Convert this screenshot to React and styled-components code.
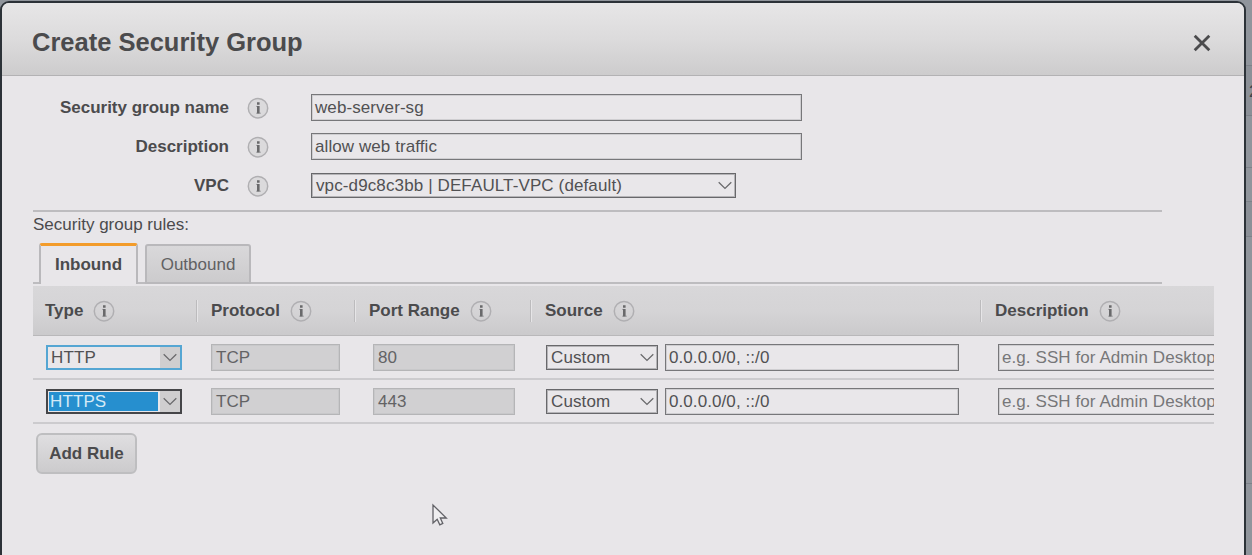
import React from 'react';
import styled, { createGlobalStyle } from 'styled-components';

const GlobalStyle = createGlobalStyle`
  * { box-sizing: border-box; }
  body {
    margin: 0;
    overflow: hidden;
    background: #90959c;
    font-family: "Liberation Sans", Arial, sans-serif;
    font-size: 17px;
    line-height: 20px;
    color: #4b4b4d;
  }
`;

const Page = styled.div`
  position: relative;
  display: flex;
  width: 1252px;
  height: 555px;
  padding-top: 1px;
  overflow: hidden;
  background: #90959c;
`;

const Modal = styled.section`
  width: 1246px;
  height: 600px;
  flex: none;
  border: 2px solid #2c3238;
  border-radius: 9px 9px 0 0;
  background: #e8e6e9;
  overflow: hidden;
`;

const Backdrop = styled.aside`
  width: 6px;
  flex: none;
  display: flex;
  flex-direction: column;
  overflow: hidden;
`;

const Strip = styled.div`
  flex: none;
  height: ${(p) => p.$h}px;
  border-bottom: 1px solid #7d8289;
  background: ${(p) => p.$bg || 'transparent'};
  padding: ${(p) => p.$pad || '0'};
  color: #3d4248;
`;

const Header = styled.header`
  display: flex;
  align-items: center;
  justify-content: space-between;
  height: 73px;
  padding: 5px 33px 0 30px;
  background: linear-gradient(#e7e6e7, #dcdbdc 50%, #cdcccd);
  border-bottom: 1px solid #b3b2b4;
`;

const Title = styled.h1`
  margin: 0;
  font-size: 25.5px;
  line-height: 30px;
  font-weight: bold;
  color: #4b4b4d;
`;

const CloseButton = styled.button`
  display: flex;
  padding: 2px 0 0;
  border: 0;
  background: none;
`;

const Body = styled.div`
  padding: 18px 0 0 31px;
`;

const Form = styled.div`
  display: flex;
  flex-direction: column;
  gap: 12px;
`;

const FormRow = styled.div`
  display: flex;
  align-items: center;
  height: 27px;
`;

const Label = styled.label`
  width: 196px;
  margin-right: 18px;
  text-align: right;
  font-weight: bold;
`;

const InfoSvg = styled.svg`
  flex: none;
  display: block;
`;

const FieldBox = styled.div`
  display: flex;
  align-items: center;
  flex: none;
  width: ${(p) => p.$w}px;
  height: 27px;
  margin-left: ${(p) => p.$ml || 0}px;
  padding: 1px 3px 0 ${(p) => (p.$disabled ? 4 : 3)}px;
  white-space: nowrap;
  letter-spacing: 0.08px;
  border: ${(p) => (p.$disabled ? '1px solid #b5b5b7' : '1px solid #77777a')};
  box-shadow: inset 0 0 0 1px ${(p) => (p.$disabled ? '#c8c8ca' : '#cfced1')};
  background: ${(p) => (p.$disabled ? '#d1d0d2' : '#e9e7ea')};
  color: ${(p) => (p.$placeholder ? '#777779' : p.$disabled ? '#636365' : '#515153')};
`;

const selectBorders = {
  hover: '2px solid #55a6d3',
  open: '2px solid #454548',
  idle: '1px solid #68686b',
};

const SelectBox = styled.div`
  display: flex;
  align-items: stretch;
  flex: none;
  width: ${(p) => p.$w}px;
  height: 25px;
  margin-left: ${(p) => p.$ml || 0}px;
  border: ${(p) => selectBorders[p.$state]};
  box-shadow: ${(p) => (p.$state === 'idle' ? 'inset 0 0 0 1px #b5b4b7' : 'none')};
  background: #e9e7ea;
`;

const SelectValue = styled.span`
  flex: 1;
  display: flex;
  align-items: center;
  margin: ${(p) => (p.$state === 'open' ? '1px 2px 1px 1px' : '0')};
  padding: 1px 0 0 ${(p) => ({ open: 1, hover: 3, idle: 4 })[p.$state]}px;
  white-space: nowrap;
  letter-spacing: 0.12px;
  background: ${(p) => (p.$state === 'open' ? '#268fcf' : 'transparent')};
  color: ${(p) => (p.$state === 'open' ? '#d4e9f6' : '#515153')};
`;

const SelectArrow = styled.span`
  display: flex;
  align-items: center;
  justify-content: center;
  width: 20px;
  background: ${(p) => (p.$shaded ? '#cfcecf' : 'transparent')};
`;

const Rules = styled.div`
  width: 1129px;
  margin-top: 11px;
  border-top: 2px solid #bdbcbf;
  padding-top: 3px;
`;

const Tabs = styled.div`
  display: flex;
  align-items: flex-end;
  height: 41px;
  margin-top: 8px;
  padding-left: 6px;
  gap: 7px;
  box-shadow: inset 0 -2px 0 #bdbcbf;
`;

const Tab = styled.div`
  display: flex;
  align-items: center;
  justify-content: center;
  height: ${(p) => (p.$active ? 41 : 40)}px;
  width: ${(p) => (p.$active ? 99 : 106)}px;
  padding-top: ${(p) => (p.$active ? 0 : 2)}px;
  border: 2px solid #b9b8bb;
  border-top: ${(p) => (p.$active ? '3px solid #f39c2b' : '2px solid #b9b8bb')};
  border-bottom: ${(p) => (p.$active ? '0' : '2px solid #b9b8bb')};
  border-radius: 3px 3px 0 0;
  background: ${(p) => (p.$active ? '#e8e6e9' : 'linear-gradient(#d9d8da, #cccbcd)')};
  font-weight: ${(p) => (p.$active ? 'bold' : 'normal')};
  color: ${(p) => (p.$active ? '#4b4b4d' : '#616163')};
`;

const Table = styled.div`
  width: 1181px;
  margin-top: 2px;
  overflow: hidden;
`;

const columns = '163px 158px 176px 450px 300px';

const TableHead = styled.div`
  display: grid;
  grid-template-columns: ${columns};
  align-items: center;
  height: 50px;
  background: linear-gradient(#d8d7d9, #d5d4d6 50%, #cbcacc);
  border-bottom: 1px solid #b9b8ba;
`;

const HeadCell = styled.div`
  display: flex;
  align-items: center;
  gap: 10px;
  height: 22px;
  padding-left: ${(p) => (p.$first ? 12 : 14)}px;
  border-left: ${(p) => (p.$first ? '0' : '1px solid #bcbbbd')};
  box-shadow: ${(p) => (p.$first ? 'none' : 'inset 1px 0 0 #e6e5e7')};
  font-weight: bold;
`;

const TableRow = styled.div`
  display: grid;
  grid-template-columns: ${columns};
  align-items: center;
  height: 44px;
  border-bottom: 2px solid #cccbce;
`;

const Cell = styled.div`
  display: flex;
  align-items: center;
  gap: 7px;
  padding-left: ${(p) => p.$pad}px;
`;

const AddButton = styled.button`
  display: flex;
  align-items: center;
  justify-content: center;
  width: 101px;
  height: 41px;
  margin: 9px 0 0 3px;
  padding: 0;
  border: 2px solid #bebec0;
  border-radius: 6px;
  background: linear-gradient(#dfdee0, #cccbcd);
  font: bold 17px/20px "Liberation Sans", Arial, sans-serif;
  color: #4b4b4d;
`;

const Pointer = styled.svg`
  position: absolute;
  left: 431px;
  top: 503px;
`;

const Info = ({ fill = 'none' }) => (
  <InfoSvg width="22" height="22" viewBox="0 0 22 22">
    <circle cx="11" cy="11.2" r="9.7" fill={fill} stroke="#b0afb2" strokeWidth="1.5" />
    <path d="M9 9.4h2M9 16.2h5" fill="none" stroke="#a3a2a5" strokeWidth="1" />
    <path d="M11.3 9v7.6M11.3 5.2v2.5" fill="none" stroke="#69696b" strokeWidth="2.6" />
  </InfoSvg>
);

const Select = ({ children, state = 'idle', ...rest }) => (
  <SelectBox $state={state} {...rest}>
    <SelectValue $state={state}>{children}</SelectValue>
    <SelectArrow $shaded={state !== 'idle'}>
      <svg width="14" height="9" viewBox="0 0 14 9">
        <path d="M0.7 1.2L7 7.4l6.3-6.2" fill="none" stroke="#6a6a6c" strokeWidth="1.3" />
      </svg>
    </SelectArrow>
  </SelectBox>
);

const rules = [
  { type: 'HTTP', port: '80', state: 'hover' },
  { type: 'HTTPS', port: '443', state: 'open' },
];

export default function App() {
  return (
    <Page>
      <GlobalStyle />
      <Modal>
        <Header>
          <Title>Create Security Group</Title>
          <CloseButton aria-label="Close">
            <svg width="18" height="18" viewBox="0 0 18 18">
              <path d="M1.7 1.7l14.6 14.6M16.3 1.7L1.7 16.3" stroke="#4b4b4d" strokeWidth="2.8" />
            </svg>
          </CloseButton>
        </Header>
        <Body>
          <Form>
            <FormRow>
              <Label>Security group name</Label>
              <Info fill="#dbdadc" />
              <FieldBox $w={491} $ml={42}>web-server-sg</FieldBox>
            </FormRow>
            <FormRow>
              <Label>Description</Label>
              <Info fill="#dbdadc" />
              <FieldBox $w={491} $ml={42}>allow web traffic</FieldBox>
            </FormRow>
            <FormRow>
              <Label>VPC</Label>
              <Info fill="#dbdadc" />
              <Select $w={425} $ml={42}>vpc-d9c8c3bb | DEFAULT-VPC (default)</Select>
            </FormRow>
          </Form>
          <Rules>
            Security group rules:
            <Tabs>
              <Tab $active>Inbound</Tab>
              <Tab>Outbound</Tab>
            </Tabs>
          </Rules>
          <Table>
            <TableHead>
              <HeadCell $first>Type <Info /></HeadCell>
              <HeadCell>Protocol <Info /></HeadCell>
              <HeadCell>Port Range <Info /></HeadCell>
              <HeadCell>Source <Info /></HeadCell>
              <HeadCell>Description <Info /></HeadCell>
            </TableHead>
            {rules.map((rule) => (
              <TableRow key={rule.type}>
                <Cell $pad={13}><Select $w={136} state={rule.state}>{rule.type}</Select></Cell>
                <Cell $pad={15}><FieldBox $w={129} $disabled>TCP</FieldBox></Cell>
                <Cell $pad={19}><FieldBox $w={142} $disabled>{rule.port}</FieldBox></Cell>
                <Cell $pad={16}>
                  <Select $w={112}>Custom</Select>
                  <FieldBox $w={294}>0.0.0.0/0, ::/0</FieldBox>
                </Cell>
                <Cell $pad={18}>
                  <FieldBox $w={270} $placeholder>e.g. SSH for Admin Desktop</FieldBox>
                </Cell>
              </TableRow>
            ))}
          </Table>
          <AddButton>Add Rule</AddButton>
        </Body>
      </Modal>
      <Backdrop>
        <Strip $h={65} />
        <Strip $h={50} $bg="#8b9097" $pad="16px 0 0 3px">2</Strip>
        <Strip $h={52} />
        <Strip $h={34} />
        <Strip $h={35} $bg="#8b9097" />
        <Strip $h={247} />
      </Backdrop>
      <Pointer width="18" height="26" viewBox="0 0 18 26">
        <path d="M2 2v18l4.2-3.8 2.6 5.6 3-1.4-2.5-5.4h6z" fill="#efeef0" stroke="#626267" strokeWidth="1.3" />
      </Pointer>
    </Page>
  );
}
